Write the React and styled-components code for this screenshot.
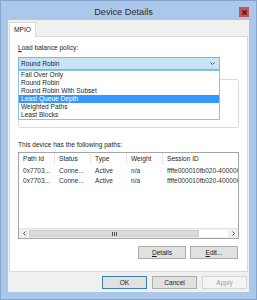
import React from 'react';
import styled, { createGlobalStyle } from 'styled-components';

const GlobalStyle = createGlobalStyle`
  html, body { margin: 0; padding: 0; }
  body {
    font-family: "Liberation Sans", Arial, sans-serif;
    font-size: 6.6px;
    color: #1e1e1e;
  }
  * { box-sizing: border-box; }
`;

const Window = styled.div`
  width: 257px;
  height: 300px;
  background: #abc7e9;
  border: 1px solid #86a5cc;
  padding: 0 7px 7px 7px;
  display: flex;
  flex-direction: column;
`;

const TitleBar = styled.div`
  height: 19px;
  padding-top: 3px;
  display: flex;
  align-items: center;
`;

const Title = styled.div`
  flex: 1;
  text-align: center;
  font-size: 9.2px;
  color: #2b2b2b;
`;

const CloseButton = styled.div`
  width: 10px;
  height: 10px;
  background: #c75050;
  display: flex;
  align-items: center;
  justify-content: center;
`;

const Client = styled.div`
  flex: 1;
  background: #f0f0f0;
  padding: 2px 1px 0 1px;
  display: flex;
  flex-direction: column;
`;

const TabStrip = styled.div`
  display: flex;
  height: 14px;
`;

const Tab = styled.div`
  width: 27px;
  height: 15px;
  background: #fff;
  border: 1px solid #d9d9d9;
  border-bottom: none;
  padding: 3px 0 0 4px;
  position: relative;
  z-index: 1;
`;

const TabPage = styled.div`
  height: 236px;
  background: #fff;
  border: 1px solid #d9d9d9;
  padding: 0 8px;
  display: flex;
  flex-direction: column;
`;

const Label = styled.div`
  margin-top: ${(p) => p.$top}px;
  height: 8px;
  line-height: 8px;
  white-space: nowrap;
`;

const ComboWrap = styled.div`
  position: relative;
  width: 202px;
  margin-top: 5px;
`;

const Combo = styled.div`
  height: 13px;
  background: #c9e3f6;
  border: 1px solid #7eb4ea;
  display: flex;
  align-items: center;
  justify-content: space-between;
  padding: 0 4px 0 2px;
`;

const DropList = styled.div`
  position: absolute;
  left: 0;
  top: 100%;
  width: 100%;
  background: #fff;
  border: 1px solid #83c6e8;
  z-index: 2;
`;

const DropItem = styled.div`
  height: 8px;
  line-height: 8px;
  padding-left: 2px;
  background: ${(p) => (p.$selected ? '#3399ff' : 'transparent')};
  color: ${(p) => (p.$selected ? '#fff' : '#1e1e1e')};
`;

const GroupBox = styled.div`
  margin-top: 9px;
  height: 49px;
  border: 1px solid #dcdcdc;
  border-radius: 2px;
`;

const ListView = styled.div`
  margin-top: 3px;
  height: 87px;
  border: 1px solid #a5a5a5;
  display: flex;
  flex-direction: column;
  overflow: hidden;
`;

const Row = styled.div`
  display: grid;
  grid-template-columns: 36px 36px 36px 36px 120px;
  height: ${(p) => (p.$header ? 11 : 10)}px;
  line-height: ${(p) => (p.$header ? 11 : 10)}px;
  margin-top: ${(p) => (p.$first ? 2 : 0)}px;
  color: ${(p) => (p.$header ? '#1e1e1e' : '#333')};
  white-space: nowrap;
`;

const Cell = styled.div`
  padding-left: 4px;
  overflow: hidden;
  border-right: ${(p) => (p.$header ? '1px solid #e5e5e5' : 'none')};
`;

const Rows = styled.div`
  flex: 1;
`;

const HScroll = styled.div`
  height: 10px;
  display: flex;
  border-top: 1px solid #e6e6e6;
  background: #f0f0f0;
`;

const ScrollArrow = styled.div`
  width: 10px;
  display: flex;
  align-items: center;
  justify-content: center;
  background: #f0f0f0;
`;

const ScrollTrack = styled.div`
  flex: 1;
  display: flex;
  padding: 1px 0;
`;

const Thumb = styled.div`
  width: 170px;
  background: #dadada;
  border: 1px solid #cfcfcf;
  display: flex;
  align-items: center;
  justify-content: center;
`;

const TrackRest = styled.div`
  flex: 1;
  background: #fff;
`;

const ButtonRow = styled.div`
  display: flex;
  justify-content: flex-end;
  gap: ${(p) => p.$gap}px;
  margin-top: ${(p) => p.$top}px;
  padding-right: ${(p) => p.$right || 0}px;
`;

const Button = styled.div`
  width: ${(p) => p.$w}px;
  height: 13px;
  display: flex;
  align-items: center;
  justify-content: center;
  background: ${(p) => (p.$disabled ? '#f4f4f4' : '#e1e1e1')};
  border: 1px solid
    ${(p) => (p.$default ? '#3c7fb1' : p.$disabled ? '#d5d5d5' : '#adadad')};
  color: ${(p) => (p.$disabled ? '#a3a3a3' : '#1e1e1e')};
`;

const Chevron = ({ dir }) => {
  const d = {
    down: 'M0.5 0.5 L2.5 2.5 L4.5 0.5',
    left: 'M2.5 0.5 L0.5 2.5 L2.5 4.5',
    right: 'M0.5 0.5 L2.5 2.5 L0.5 4.5',
  }[dir];
  const size = dir === 'down' ? [5, 3] : [3, 5];
  return (
    <svg width={size[0]} height={size[1]} viewBox={`0 0 ${size[0]} ${size[1]}`}>
      <path d={d} fill="none" stroke="#555" strokeWidth="1" />
    </svg>
  );
};

const Grip = () => (
  <svg width="5" height="4" viewBox="0 0 5 4">
    <path d="M0.5 0 V4 M2.5 0 V4 M4.5 0 V4" stroke="#555" strokeWidth="1" />
  </svg>
);

const CloseIcon = () => (
  <svg width="5" height="5" viewBox="0 0 5 5">
    <path d="M0.5 0.5 L4.5 4.5 M4.5 0.5 L0.5 4.5" stroke="#222" strokeWidth="1.4" />
  </svg>
);

const policies = [
  'Fail Over Only',
  'Round Robin',
  'Round Robin With Subset',
  'Least Queue Depth',
  'Weighted Paths',
  'Least Blocks',
];

const columns = ['Path Id', 'Status', 'Type', 'Weight', 'Session ID'];

const paths = [
  ['0x7703...', 'Conne...', 'Active', 'n/a', 'ffffe000010fb020-4000000000000001'],
  ['0x7703...', 'Conne...', 'Active', 'n/a', 'ffffe000010fb020-4000000000000002'],
];

export default function App() {
  return (
    <>
      <GlobalStyle />
      <Window>
        <TitleBar>
          <Title>Device Details</Title>
          <CloseButton>
            <CloseIcon />
          </CloseButton>
        </TitleBar>
        <Client>
          <TabStrip>
            <Tab>MPIO</Tab>
          </TabStrip>
          <TabPage>
            <Label $top={7}>
              <u>L</u>oad balance policy:
            </Label>
            <ComboWrap>
              <Combo>
                <span>Round Robin</span>
                <Chevron dir="down" />
              </Combo>
              <DropList>
                {policies.map((p) => (
                  <DropItem key={p} $selected={p === 'Least Queue Depth'}>
                    {p}
                  </DropItem>
                ))}
              </DropList>
            </ComboWrap>
            <GroupBox />
            <Label $top={13}>This device has the following paths:</Label>
            <ListView>
              <Row $header>
                {columns.map((c) => (
                  <Cell key={c} $header>
                    {c}
                  </Cell>
                ))}
              </Row>
              <Rows>
                {paths.map((r, i) => (
                  <Row key={i} $first={i === 0}>
                    {r.map((v, j) => (
                      <Cell key={j}>{v}</Cell>
                    ))}
                  </Row>
                ))}
              </Rows>
              <HScroll>
                <ScrollArrow>
                  <Chevron dir="left" />
                </ScrollArrow>
                <ScrollTrack>
                  <Thumb>
                    <Grip />
                  </Thumb>
                  <TrackRest />
                </ScrollTrack>
                <ScrollArrow>
                  <Chevron dir="right" />
                </ScrollArrow>
              </HScroll>
            </ListView>
            <ButtonRow $gap={4} $top={7} $right={1}>
              <Button $w={48}>
                <span>
                  <u>D</u>etails
                </span>
              </Button>
              <Button $w={48}>
                <span>
                  <u>E</u>dit...
                </span>
              </Button>
            </ButtonRow>
          </TabPage>
          <ButtonRow $gap={5} $top={4} $right={1}>
            <Button $w={45} $default>
              OK
            </Button>
            <Button $w={45}>Cancel</Button>
            <Button $w={45} $disabled>
              Apply
            </Button>
          </ButtonRow>
        </Client>
      </Window>
    </>
  );
}
